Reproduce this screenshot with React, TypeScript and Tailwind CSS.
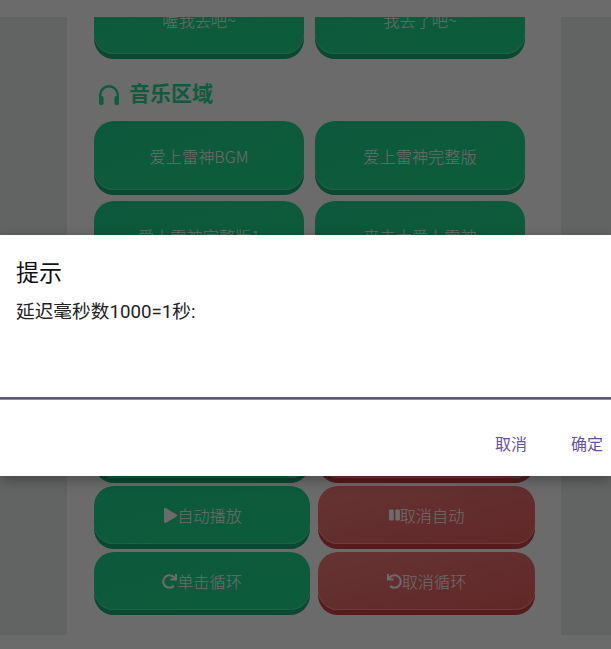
import { FaPause, FaPlay, FaRedo, FaUndo } from 'react-icons/fa'
import type { ReactNode } from 'react'

const FONT = "font-['Roboto','Noto_Sans_CJK_SC',sans-serif]"

function Headset() {
  return (
    <svg viewBox="0 0 22 20" className="h-[20px] w-[22px]" fill="none">
      <path d="M2.2 12.5V10a8.8 8.8 0 0 1 17.6 0v2.5" stroke="currentColor" strokeWidth="2.4" />
      <rect x="1" y="11" width="4.6" height="9" rx="1.8" fill="currentColor" />
      <rect x="16.4" y="11" width="4.6" height="9" rx="1.8" fill="currentColor" />
    </svg>
  )
}

function GameButton(props: { label?: string; icon?: ReactNode; tone?: 'green' | 'red'; className?: string }) {
  const tone =
    props.tone === 'red'
      ? 'bg-gradient-to-br from-[#f27a7a] to-[#e85f5f] shadow-[inset_0_-1px_0_#f39090,0_5px_0_#cf4242]'
      : 'bg-gradient-to-br from-[#20d292] to-[#1edb8c] shadow-[inset_0_-1px_0_#4fe2aa,0_5px_0_#16ad78]'
  return (
    <div
      className={`flex items-center justify-center rounded-[20px] font-['Noto_Sans_CJK_SC',sans-serif] text-[16.2px] font-light text-white ${tone} ${props.className ?? ''}`}
    >
      {props.icon}
      {props.label}
    </div>
  )
}

export default function App() {
  return (
    <div className={`relative h-[649px] w-[611px] overflow-hidden bg-white ${FONT}`}>
      <div className="h-[17px] bg-white" />

      <div className="flex h-[618px] overflow-hidden">
        <div className="w-[67px] bg-[#e8efec]" />
        <div className="w-[494px] bg-white pl-[27px]">
          <div className="-mt-[32px] grid w-[431px] grid-cols-[210px_210px] gap-x-[11px] gap-y-[11px]">
            <GameButton label="喔我去吧~" className="h-[69px] pt-[2px]" />
            <GameButton label="我去了吧~" className="h-[69px] pt-[2px]" />
          </div>

          <div className="mt-[25px] flex h-[32px] items-center gap-[9px] pl-[4px] text-[21px] font-bold text-[#25d895]">
            <Headset />
            音乐区域
          </div>

          <div className="mt-[10px] grid w-[431px] grid-cols-[210px_210px] gap-x-[11px] gap-y-[11px]">
            <GameButton label="爱上雷神BGM" className="h-[69px] pt-[2px]" />
            <GameButton label="爱上雷神完整版" className="h-[69px] pt-[2px]" />
            <GameButton label="爱上雷神完整版1" className="h-[69px] pt-[2px]" />
            <GameButton label="来去大爱上雷神" className="h-[69px] pt-[2px]" />
          </div>

          <div className="mt-[150px] grid w-[441px] grid-cols-[216px_217px] gap-x-[8px] gap-y-[8px]">
            <GameButton className="h-[58px]" />
            <GameButton tone="red" className="h-[58px]" />
            <GameButton
              label="自动播放"
              icon={<FaPlay className="ml-[2px] h-[15px] w-[13px]" />}
              className="h-[58px]"
            />
            <GameButton
              label="取消自动"
              tone="red"
              icon={<FaPause className="h-[14px] w-[11px]" />}
              className="h-[58px]"
            />
            <GameButton
              label="单击循环"
              icon={<FaRedo className="h-[15px] w-[15px]" />}
              className="h-[58px]"
            />
            <GameButton
              label="取消循环"
              tone="red"
              icon={<FaUndo className="h-[15px] w-[15px]" />}
              className="h-[58px]"
            />
          </div>
        </div>
        <div className="w-[50px] bg-[#e8efec]" />
      </div>

      <div className="h-[14px] bg-white" />

      {/* dim layer over the page */}
      <div className="absolute inset-0 bg-black/[0.58]" />

      {/* prompt dialog */}
      <div className="absolute inset-x-0 top-[235px] flex h-[241px] flex-col bg-white shadow-[0_4px_12px_rgba(0,0,0,0.3)]">
        <div className="mt-[24px] pl-[16px] text-[23px] leading-[30px] text-[#111]">提示</div>
        <div className="mt-[10px] pl-[16px] text-[18.7px] leading-[26px] text-[#222]">延迟毫秒数1000=1秒:</div>
        <div className="mt-[72px] h-[3px] border-b border-[#8f87ad] bg-[#5f5878]" />
        <div className="mt-[33px] flex justify-end gap-[44px] pr-[8px] text-[16px] leading-[24px] text-[#6750a4]">
          <span>取消</span>
          <span>确定</span>
        </div>
      </div>
    </div>
  )
}
